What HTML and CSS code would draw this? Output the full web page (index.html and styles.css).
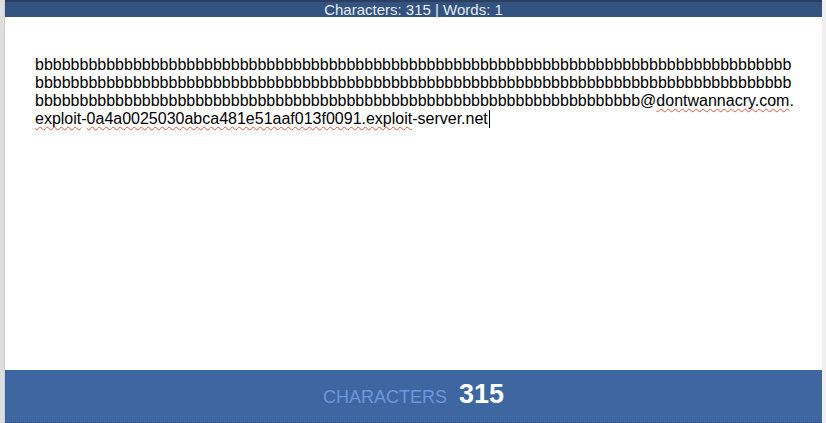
FILE: index.html
```html
<!DOCTYPE html>
<html>
<head>
<meta charset="utf-8">
<link rel="stylesheet" href="styles.css">
</head>
<body>
<div class="edge-left"></div>
<div class="shell">
  <div class="topline"></div>
  <div class="statusbar">Characters: 315 | Words: 1</div>
  <div class="editor">
    <div class="text">bbbbbbbbbbbbbbbbbbbbbbbbbbbbbbbbbbbbbbbbbbbbbbbbbbbbbbbbbbbbbbbbbbbbbbbbbbbbbbbbbbbbb<br>bbbbbbbbbbbbbbbbbbbbbbbbbbbbbbbbbbbbbbbbbbbbbbbbbbbbbbbbbbbbbbbbbbbbbbbbbbbbbbbbbbbbb<br>bbbbbbbbbbbbbbbbbbbbbbbbbbbbbbbbbbbbbbbbbbbbbbbbbbbbbbbbbbbbbbbbbbbb@<span class="spell">dontwannacry.com</span>.<br><span class="spell">exploit</span>-<span class="spell">0a4a0025030abca481e51aaf013f0091.exploit</span>-server.net<span class="caret"></span></div>
  </div>
  <div class="counter">
    <span class="counter-label">CHARACTERS</span>
    <span class="counter-value">315</span>
  </div>
</div>
<div class="edge-right"></div>
</body>
</html>
```
FILE: styles.css
```css
html, body {
  margin: 0;
  padding: 0;
}
body {
  display: flex;
  width: 826px;
  height: 423px;
  overflow: hidden;
  background: #ffffff;
  font-family: "Liberation Sans", Arial, sans-serif;
}
.edge-left {
  width: 4px;
  background: #dedede;
  border-right: 1px solid #cdcdcd;
  flex: none;
}
.edge-right {
  width: 4px;
  background: #efefef;
  flex: none;
}
.shell {
  flex: 1;
  display: flex;
  flex-direction: column;
  min-width: 0;
}
.topline {
  height: 2px;
  background: #2b3e5d;
}
.statusbar {
  height: 15px;
  line-height: 15px;
  background: #32527f;
  color: #e9edf4;
  font-size: 15px;
  text-align: center;
  white-space: nowrap;
}
.editor {
  flex: 1;
  padding: 39px 20px 0 30px;
  background: #ffffff;
}
.text {
  font-size: 16px;
  color: #000000;
  white-space: nowrap;
}
.spell {
  text-decoration: underline wavy #e2553d;
  text-decoration-thickness: 1px;
  text-decoration-skip-ink: none;
  text-underline-offset: 2px;
}
.caret {
  display: inline-block;
  width: 1px;
  height: 18px;
  background: #000000;
  vertical-align: -4px;
  margin-left: 1px;
}
.counter {
  background: #3e66a1;
  border-bottom: 1px dotted #28466f;
  display: flex;
  align-items: baseline;
  justify-content: center;
  gap: 12px;
  padding-top: 9px;
  box-sizing: border-box;
  height: 53px;
}
.counter-label {
  font-size: 18px;
  color: #6b98dc;
}
.counter-value {
  font-size: 27px;
  font-weight: bold;
  color: #ffffff;
}
```
